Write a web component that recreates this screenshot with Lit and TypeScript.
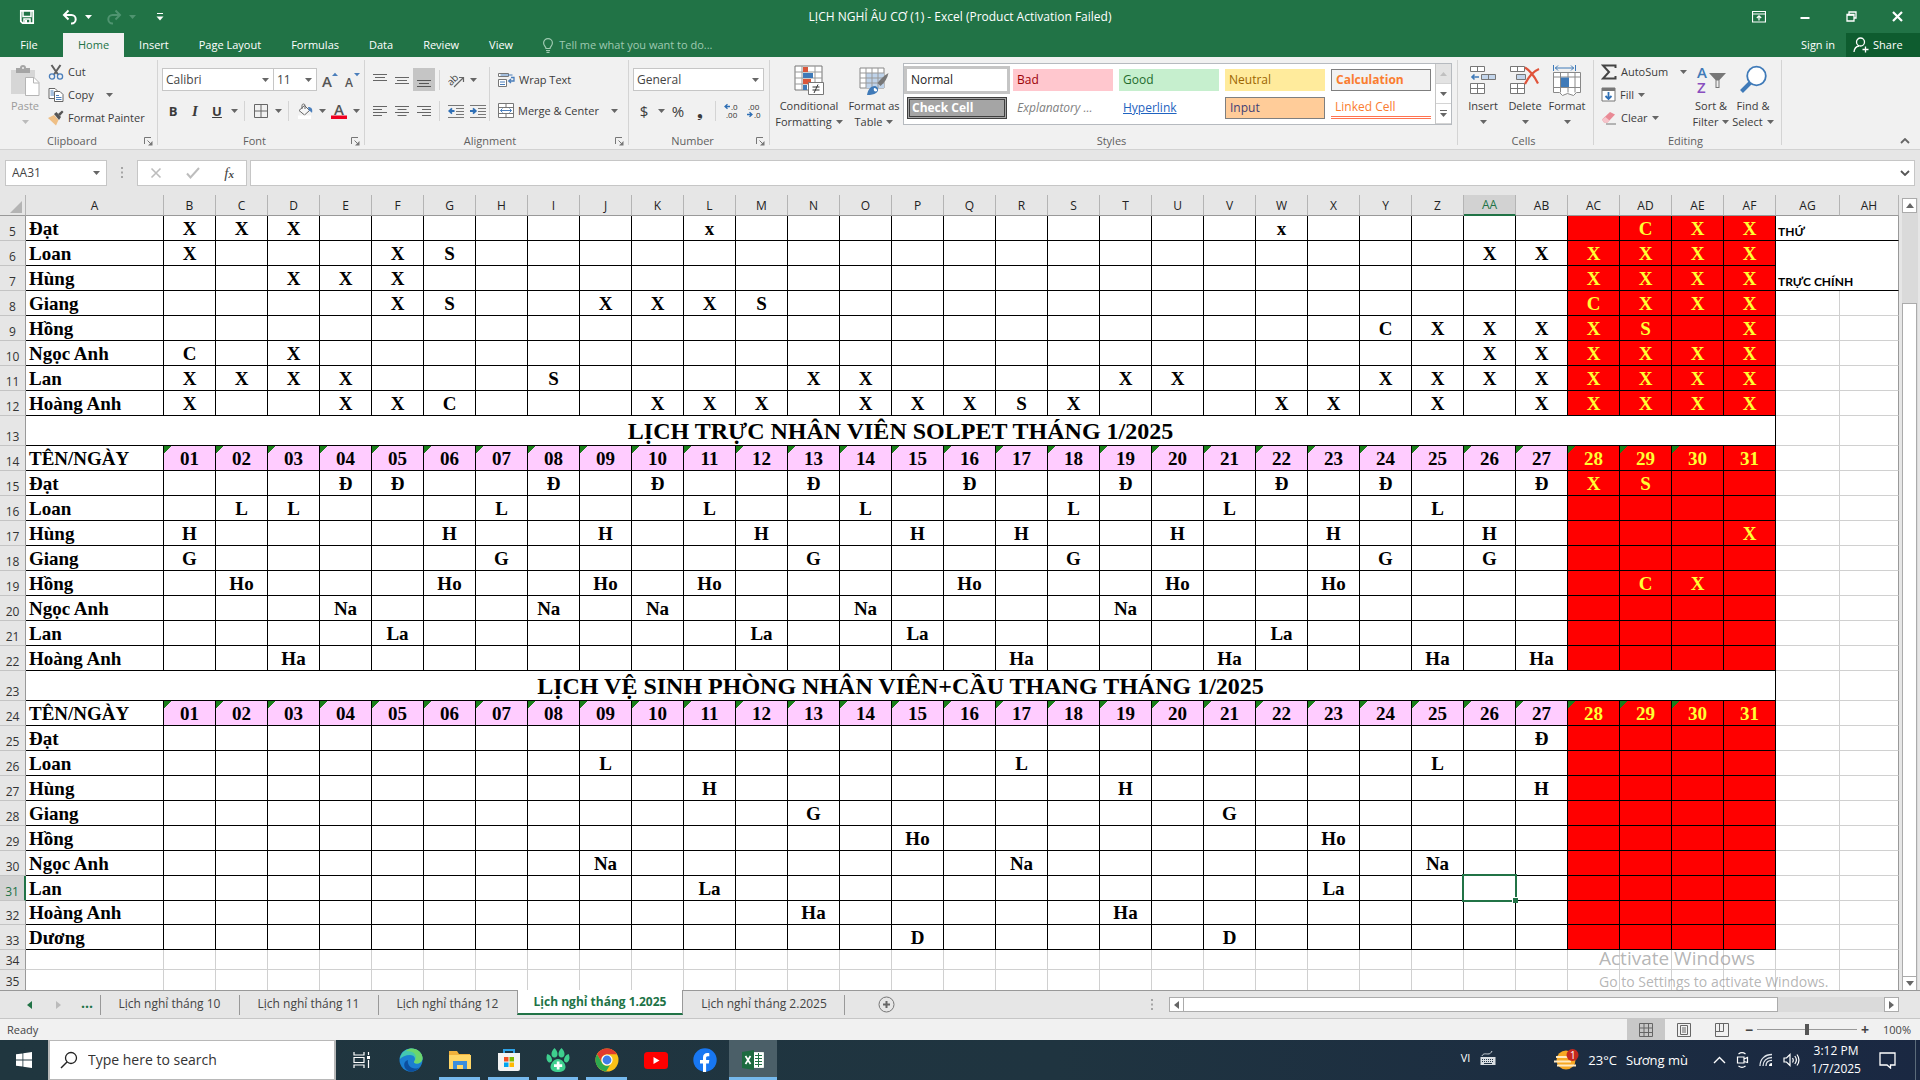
import { LitElement, html, svg, css, nothing } from "lit";
import { customElement } from "lit/decorators.js";
import { classMap } from "lit/directives/class-map.js";

type Marks = Record<number, string>;
interface Row {
  n: number;
  kind: "names" | "title" | "days" | "blank";
  label?: string;
  marks?: Marks;
}

/** Same mark on several days. */
const on = (text: string, ...days: number[]): Marks =>
  Object.fromEntries(days.map((d) => [d, text]));

const names = (n: number, label: string, ...marks: Marks[]): Row => ({
  n,
  kind: "names",
  label,
  marks: Object.assign({}, ...marks),
});

const ROWS: Row[] = [
  names(5, "Đạt", on("X", 1, 2, 3, 30, 31), on("x", 11, 22), on("C", 29)),
  names(6, "Loan", on("X", 1, 5, 26, 27, 28, 29, 30, 31), on("S", 6)),
  names(7, "Hùng", on("X", 3, 4, 5, 28, 29, 30, 31)),
  names(8, "Giang", on("X", 5, 9, 10, 11, 29, 30, 31), on("S", 6, 12), on("C", 28)),
  names(9, "Hồng", on("X", 25, 26, 27, 28, 31), on("C", 24), on("S", 29)),
  names(10, "Ngọc Anh", on("X", 3, 26, 27, 28, 29, 30, 31), on("C", 1)),
  names(11, "Lan", on("X", 1, 2, 3, 4, 13, 14, 19, 20, 24, 25, 26, 27, 28, 29, 30, 31), on("S", 8)),
  names(12, "Hoàng Anh", on("X", 1, 4, 5, 10, 11, 12, 14, 15, 16, 18, 22, 23, 25, 27, 28, 29, 30, 31), on("C", 6), on("S", 17)),
  { n: 13, kind: "title", label: "LỊCH TRỰC NHÂN VIÊN SOLPET THÁNG 1/2025" },
  { n: 14, kind: "days", label: "TÊN/NGÀY" },
  names(15, "Đạt", on("Đ", 4, 5, 8, 10, 13, 16, 19, 22, 24, 27), on("X", 28), on("S", 29)),
  names(16, "Loan", on("L", 2, 3, 7, 11, 14, 18, 21, 25)),
  names(17, "Hùng", on("H", 1, 6, 9, 12, 15, 17, 20, 23, 26), on("X", 31)),
  names(18, "Giang", on("G", 1, 7, 13, 18, 24, 26)),
  names(19, "Hồng", on("Ho", 2, 6, 9, 11, 16, 20, 23), on("C", 29), on("X", 30)),
  names(20, "Ngọc Anh", on("Na", 4, 10, 14, 19), on("Na  ", 8)),
  names(21, "Lan", on("La", 5, 12, 15, 22)),
  names(22, "Hoàng Anh", on("Ha", 3, 17, 21, 25, 27)),
  { n: 23, kind: "title", label: "LỊCH VỆ SINH PHÒNG NHÂN VIÊN+CẦU THANG THÁNG 1/2025" },
  { n: 24, kind: "days", label: "TÊN/NGÀY" },
  names(25, "Đạt", on("Đ", 27)),
  names(26, "Loan", on("L", 9, 17, 25)),
  names(27, "Hùng", on("H", 11, 19, 27)),
  names(28, "Giang", on("G", 13, 21)),
  names(29, "Hồng", on("Ho", 15, 23)),
  names(30, "Ngọc Anh", on("Na", 9, 17, 25)),
  names(31, "Lan", on("La", 11, 23)),
  names(32, "Hoàng Anh", on("Ha", 13, 19)),
  names(33, "Dương", on("D", 15, 21)),
  { n: 34, kind: "blank" },
  { n: 35, kind: "blank" },
];

const DAYS = Array.from({ length: 31 }, (_, i) => i + 1);
const letter = (i: number): string =>
  i < 26 ? String.fromCharCode(65 + i) : "A" + String.fromCharCode(65 + i - 26);

const icon = (w: number, h: number, body: unknown) =>
  html`<svg class="icon" width=${w} height=${h} viewBox="0 0 ${w} ${h}" fill="none" aria-hidden="true">${body}</svg>`;

const caret = html`<svg class="caret" width="7" height="4" viewBox="0 0 7 4" aria-hidden="true"><path d="M0 0h7L3.5 4z" fill="currentColor"/></svg>`;
const launcher = icon(9, 9, svg`<path d="M.5 7V.5H7M3.5 3.5l4 4" stroke="#777"/><path d="M8.500 4v4.500H4z" fill="#777"/>`);

const I = {
  save: icon(16, 16, svg`<path d="M1.800 1.800h12.400v12.400H3.600l-1.800-1.800z" stroke="#fff" stroke-width="1.700"/><path d="M4 2v5.500h8V2M5 14v-4h6v4" stroke="#fff" stroke-width="1.500"/><path d="M6 11h2v3H6z" fill="#fff"/>`),
  undo: icon(16, 16, svg`<path d="M2.500 6h7a4.200 4.200 0 0 1 0 8.400H9" stroke="#fff" stroke-width="2"/><path d="M6.500 1.500L2 6l4.500 4.500" stroke="#fff" stroke-width="2"/>`),
  redo: icon(16, 16, svg`<path d="M13.500 6h-7a4.200 4.200 0 0 0 0 8.400H7M9.500 1.500L14 6l-4.500 4.500" stroke="#4f9470" stroke-width="2"/>`),
  customize: icon(8, 8, svg`<path d="M1 .5h6" stroke="#fff"/><path d="M.5 3.500h7L4 7.500z" fill="#fff"/>`),
  ribbonOpts: icon(14, 12, svg`<path d="M.5 .5h13v10.500H.5zM.5 3h13M7 9.500V5M4.800 7L7 4.800 9.200 7" stroke="#fff" stroke-width="1.200"/>`),
  min: icon(10, 10, svg`<path d="M.5 6h9" stroke="#fff" stroke-width="2"/>`),
  restore: icon(11, 11, svg`<path d="M3 3V1h7v6H8M1 3.500h7v6.500H1z" stroke="#fff" stroke-width="1.300"/><path d="M1 4h7" stroke="#fff" stroke-width="1.600"/>`),
  close: icon(11, 11, svg`<path d="M1 1l9 9M10 1l-9 9" stroke="#fff" stroke-width="2.200"/>`),
  bulb: icon(12, 15, svg`<path d="M4 10.500c0-2-2.400-2.600-2.400-5.600a4.400 4.200 0 0 1 8.800 0c0 3-2.400 3.600-2.400 5.600zM4 12.500h4M4.500 14.300h3" stroke="#9fcab1" stroke-width="1.200"/>`),
  person: icon(16, 16, svg`<circle cx="7.500" cy="5" r="4" stroke="#fff" stroke-width="1.300"/><path d="M1 15c.3-3.500 2-5.500 5-6M9.500 12.500h6M12.500 9.500v6" stroke="#fff" stroke-width="1.300"/>`),
  paste: icon(30, 31, svg`<path d="M1 5h24v24H1z" fill="#d6d6d6"/><path d="M6 3h4a3 3 0 0 1 6 0h4v5H6z" fill="#a5a5a5"/><circle cx="13" cy="3" r="1" fill="#f1f1f1"/><path d="M15.500 12.500h8.500l5 5v13H15.500z" fill="#fff" stroke="#b5b5b5"/><path d="M23.500 12.500v5.500H29" stroke="#b5b5b5"/>`),
  cut: icon(16, 16, svg`<path d="M3.500 1l6.500 9.500M12.500 1L6 10.500" stroke="#5f5f5f" stroke-width="2"/><circle cx="4" cy="12.500" r="2.600" stroke="#4a7ebb" stroke-width="1.300"/><circle cx="12" cy="12.500" r="2.600" stroke="#4a7ebb" stroke-width="1.300"/>`),
  copy: icon(16, 16, svg`<path d="M1 1.500h6l2 2v8H1z" fill="#fff" stroke="#666"/><path d="M2.500 4h3M2.500 6h4M2.500 8h4" stroke="#4a7ebb"/><path d="M6.500 4.500H12l3 3v7H6.500z" fill="#fff" stroke="#666"/><path d="M8 8.500h3M8 10.500h5.500M8 12.500h5.500" stroke="#4a7ebb"/>`),
  painter: icon(16, 16, svg`<path d="M0 8l6-3 4.500 5L8 15.500z" fill="#efbf85"/><path d="M6 4l2.500-2 4.500 5-2 3z" fill="#555"/><path d="M10 4l4-3.500 1.500 1.500L12 6z" fill="#555"/>`),
  grow: icon(18, 16, svg`<text x="1" y="15" font-size="15" font-weight="600" fill="#555">A</text><path d="M11 4h6L14 .8z" fill="#4a7ebb"/>`),
  shrink: icon(18, 16, svg`<text x="2" y="15" font-size="12" font-weight="600" fill="#555">A</text><path d="M11 1h6l-3 3.200z" fill="#4a7ebb"/>`),
  borders: icon(14, 14, svg`<path d="M.5 .5h13v13H.5zM7 .5v13M.5 7h13" stroke="#666"/>`),
  fill: icon(16, 16, svg`<path d="M5 6V2.500C5 .5 8 .5 8 2.500V6M2 7.500L7.500 2.500l5 5-5 4.500z" fill="#f6f6f6" stroke="#666"/><path d="M11 4c3.500 0 5 2 4 6-1-1.500-2-2-3-2z" fill="#4a7ebb"/><path d="M1 12.500h13V16H1z" fill="#fff"/>`),
  fontColor: icon(16, 16, svg`<text x="3" y="12" font-size="15" font-weight="600" fill="#555">A</text><path d="M0 12.500h16V16H0z" fill="#f00020"/>`),
  alTop: icon(14, 14, svg`<path d="M0 1.500h14M2 4.500h10M0 7.500h14" stroke="#666"/>`),
  alMid: icon(14, 14, svg`<path d="M0 4.500h14M2 7.500h10M0 10.500h14" stroke="#666"/>`),
  alBot: icon(14, 14, svg`<path d="M0 7.500h14M2 10.500h10M0 13.500h14" stroke="#555"/>`),
  alLeft: icon(14, 14, svg`<path d="M0 2.500h14M0 5.500h9M0 8.500h14M0 11.500h9" stroke="#666"/>`),
  alCenter: icon(14, 14, svg`<path d="M0 2.500h14M2.500 5.500h9M0 8.500h14M2.500 11.500h9" stroke="#666"/>`),
  alRight: icon(14, 14, svg`<path d="M0 2.500h14M5 5.500h9M0 8.500h14M5 11.500h9" stroke="#666"/>`),
  orient: icon(17, 16, svg`<path d="M6 15L15.500 5.500M15.500 10V5.500H11" stroke="#666" stroke-width="1.200"/><text x="-1" y="11" font-size="10" fill="#444" transform="rotate(-45 5 8)">ab</text>`),
  outdent: icon(16, 14, svg`<path d="M0 1.500h16M8 4.500h8M8 7.500h8M8 10.500h8M0 13.500h16" stroke="#777"/><path d="M6.500 7H1.500M4 4.300L1.200 7 4 9.700" stroke="#2f6fb5" stroke-width="1.800"/>`),
  indent: icon(16, 14, svg`<path d="M0 1.500h16M8 4.500h8M8 7.500h8M8 10.500h8M0 13.500h16" stroke="#777"/><path d="M0 7h5.500M3 4.300L5.800 7 3 9.700" stroke="#2f6fb5" stroke-width="1.800"/>`),
  wrap: icon(17, 16, svg`<path d="M.5 1.500h10v3H.5zM.5 7.500h8v7H.5z" fill="#fff" stroke="#777"/><path d="M2.500 3h12M2 10h5M2 12.500h5" stroke="#4a7ebb"/><path d="M13 5.500h3V9h-5M13 7l-2.300 2 2.300 2" stroke="#4a7ebb" stroke-width="1.300"/>`),
  merge: icon(16, 15, svg`<path d="M.5 .5h15v14H.5zM.5 4.500h15M.5 10.500h15M8 .5v4M8 10.500v4" fill="#fff" stroke="#777"/><path d="M2.500 7.500h11M4.500 5.500l-2 2 2 2M11.500 5.500l2 2-2 2" stroke="#4a7ebb"/>`),
  cond: icon(30, 31, svg`<path d="M1 1h27v24H1z" fill="#fff" stroke="#777"/><path d="M1 7h27M1 13h27M1 19h27M8 1v24M21 1v24" stroke="#999"/><path d="M9 2h5v5H9zM9 14h8v5H9z" fill="#d9573b"/><path d="M9 8h10v5H9zM9 20h4v5H9z" fill="#3f7ab8"/><path d="M14.500 17.500h15v12h-15z" fill="#fff" stroke="#777"/><path d="M18.500 22h7M18.500 25h7M24 19.500L20 28" stroke="#333"/>`),
  fmtTable: icon(30, 31, svg`<path d="M1 3h24v20H1z" fill="#fff" stroke="#888"/><path d="M7 8h18v15H7z" fill="#bfd3ea"/><path d="M1 8h24M1 13h24M1 18h24M7 3v20M13 3v20M19 3v20" stroke="#999"/><path d="M29.500 8c-1 5-3.500 9-8 13l-3-3c3-4 6-7 11-10z" fill="#777"/><path d="M8 30c1-5 3-9 8-9 4 1 4 5 1 7-2 1.500-5 2-9 2z" fill="#3f7ab8"/><path d="M15 23c2 0 3.500 1.500 3 3-2 1-4 0-3-3z" fill="#fff"/>`),
  insert: icon(30, 31, svg`<path d="M2.500 1.500h14v5h-14zM9.500 1.500v5M2.500 18.500h14v10h-14zM9.500 18.500v10M2.500 23.500h14" fill="#fff" stroke="#777"/><path d="M13.500 9.500h14v5h-14zM20.500 9.500v5" fill="#c3d5eb" stroke="#777"/><path d="M3.500 12H11M6.500 9.500L4 12l2.500 2.500" stroke="#3f7ab8" stroke-width="1.600"/>`),
  del: icon(30, 31, svg`<path d="M.5 1.500h14v5H.5zM7.500 1.500v5M.5 18.500h14v10H.5zM7.500 18.500v10M.5 23.500h14" fill="#fff" stroke="#777"/><path d="M6.500 9.500h9v5h-9z" fill="#c3d5eb" stroke="#777"/><path d="M15 2.500c5 3 9 8 13 16M29 4c-5 2-10 7-14 15" stroke="#e0533a" stroke-width="2.200"/>`),
  format: icon(30, 32, svg`<path d="M1.500 0v6M23.500 0v6M3 3h19M6 .5L3.500 3 6 5.500M19 .5L21.500 3 19 5.500" stroke="#3f7ab8"/><path d="M1.500 7.500h27v20h-4l-3 3-6-2-5 2-3-3H1.500zM1.500 12h27M1.500 22.500h27M8.500 7.500v20M16 7.500v5M16 22.500v5M23 7.500v20" fill="#fff" stroke="#888"/><path d="M9 12.500h8v9.500H9z" fill="#3f7ab8"/>`),
  sum: icon(16, 16, svg`<path d="M14.500 4V1.500H2l6 6.500-6 6.500h12.500V12" stroke="#444" stroke-width="2"/>`),
  fillDown: icon(15, 15, svg`<path d="M1 1h13v13H1z" fill="#fff" stroke="#777"/><path d="M1 1h13v3H1z" fill="#777"/><path d="M7.500 5v7M4.500 9l3 3 3-3" stroke="#2f6fb5" stroke-width="1.800"/>`),
  clear: icon(16, 14, svg`<path d="M1 8.500L9 1l5 2.500-7.500 8H3z" fill="#e98a95"/><path d="M1 8.500L4.500 6l4 3.500-2 2H3z" fill="#f6c4ca"/><path d="M5 13h10" stroke="#777"/>`),
  sort: icon(30, 30, svg`<text x="1" y="13" font-size="15" font-weight="600" fill="#3f7ab8">A</text><text x="1" y="28" font-size="15" font-weight="600" fill="#8a4fbf">Z</text><path d="M13 8h17l-6.500 7v8h-4v-8z" fill="#777"/><path d="M20.500 15.500h2V22h-2z" fill="#eee"/>`),
  find: icon(30, 30, svg`<circle cx="18.500" cy="11" r="9.300" fill="#fff" stroke="#3f7ab8" stroke-width="1.800"/><path d="M12 18l-8.500 8.500" stroke="#3f7ab8" stroke-width="4"/>`),
  decInc: icon(16, 15, svg`<path d="M6 3.500H1.500M3.500 1.200L1 3.500l2.500 2.300" stroke="#2f6fb5" stroke-width="1.300"/><text x="7" y="7" font-size="8" fill="#333">.0</text><text x="2" y="15" font-size="8" fill="#333">.00</text>`),
  decDec: icon(16, 15, svg`<path d="M1 11.500h4.500M3.500 9.200L6 11.500l-2.500 2.300" stroke="#2f6fb5" stroke-width="1.300"/><text x="2" y="7" font-size="8" fill="#333">.00</text><text x="8" y="15" font-size="8" fill="#333">.0</text>`),
  chevUp: icon(10, 6, svg`<path d="M1 5l4-4 4 4" stroke="#666" stroke-width="1.800"/>`),
  chevDown: icon(10, 6, svg`<path d="M1 1l4 4 4-4" stroke="#555" stroke-width="1.800"/>`),
  cross: icon(12, 12, svg`<path d="M1.500 1.500l9 9M10.500 1.500l-9 9" stroke="#bdbdbd" stroke-width="1.600"/>`),
  check: icon(14, 12, svg`<path d="M1 6.500l3.500 4L13 1" stroke="#bdbdbd" stroke-width="2"/>`),
  dots: icon(3, 12, svg`<path d="M0 1h2M0 5.500h2M0 10h2" stroke="#a5a5a5" stroke-width="2"/>`),
  left: icon(5, 8, svg`<path d="M5 0v8L0 4z" fill="currentColor"/>`),
  right: icon(5, 8, svg`<path d="M0 0v8l5-4z" fill="currentColor"/>`),
  up: icon(8, 5, svg`<path d="M0 5h8L4 0z" fill="#666"/>`),
  down: icon(8, 5, svg`<path d="M0 0h8L4 5z" fill="#666"/>`),
  plus: icon(17, 17, svg`<circle cx="8.500" cy="8.500" r="7.500" stroke="#777"/><path d="M8.500 5v7M5 8.500h7" stroke="#666" stroke-width="2"/>`),
  vNormal: icon(14, 14, svg`<path d="M.5 .5h13v13H.5zM5 .5v13M9.500 .5v13M.5 5h13M.5 9.500h13" stroke="#666"/>`),
  vLayout: icon(14, 14, svg`<path d="M.5 .5h13v13H.5zM3.500 2.500h7v9h-7zM5 5h4M5 7h4M5 9h4" stroke="#666"/>`),
  vBreak: icon(14, 14, svg`<path d="M.5 .5h13v13H.5zM.5 8.500h8v-8M4.500 .5v8" stroke="#666"/>`),
  win: icon(16, 16, svg`<path d="M0 2.300L6.500 1.400v6.200H0zM7.300 1.300L16 0v7.600H7.300zM0 8.400h6.500v6.200L0 13.700zM7.300 8.400H16V16l-8.700-1.300z" fill="#fff"/>`),
  search: icon(18, 18, svg`<circle cx="11" cy="7" r="5.500" stroke="#222" stroke-width="1.300"/><path d="M7 11l-6 6" stroke="#222" stroke-width="1.500"/>`),
  taskView: icon(18, 16, svg`<path d="M1 0v3h10V0M1 5.500h10v5H1zM1 16v-3h10v3M15.500 0v3M15.500 8v8" stroke="#fff" stroke-width="1.200"/><path d="M14 4h3v3h-3z" fill="#fff"/>`),
  edge: icon(24, 24, svg`<circle cx="12" cy="12" r="11.500" fill="#1b7fd1"/><path d="M.8 11C2 4 7 .5 12.500 .5 19 .5 23.500 5.500 23.500 10c0 4-3 5.500-5.500 5.500-3 0-3.500-1.300-2.500-2.500 1.500-3-.5-6-4.500-6C6.500 7 3 9 .8 11z" fill="#44c8b0"/><path d="M12 .5c7 0 11.500 5 11.500 9.500 0 4-3 5.500-5.500 5.500-3 0-3.500-1.300-2.500-2.500C19 8 16 3 7 3c1.500-1.500 3-2.500 5-2.500z" fill="#6bd66e"/><path d="M9 12c-1 4 2 8.500 7 8.500 2 0 3.500-.5 5-1.500-3 4-8 5.500-12.500 3.500C4 20 4 13 9 12z" fill="#0c4f9f"/>`),
  explorer: icon(22, 20, svg`<path d="M0 1h8l2 3h11v15H0z" fill="#f0b13c"/><path d="M0 5h22v14H0z" fill="#ffd667"/><path d="M4 11h14v8h-4v-4H8v4H4z" fill="#3b8ddd"/>`),
  store: icon(24, 24, svg`<path d="M7 5V2h10v3" stroke="#2ea3e8" stroke-width="2"/><path d="M1 5h22v16a2 2 0 0 1-2 2H3a2 2 0 0 1-2-2z" fill="#f3f3f3"/><path d="M7 9h4.500v4.500H7z" fill="#f25022"/><path d="M12.500 9H17v4.500h-4.500z" fill="#7fba00"/><path d="M7 14.500h4.500V19H7z" fill="#00a4ef"/><path d="M12.500 14.500H17V19h-4.500z" fill="#ffb900"/>`),
  paw: icon(24, 24, svg`<g fill="#3ecf8e"><path d="M8.500 0c2 2 3 4 3 6s-1 3.500-3 3.500S5.500 8 5.500 6s1-4 3-6zM15.500 0c2 2 3 4 3 6s-1 3.500-3 3.500-3-1.500-3-3.500 1-4 3-6zM1.500 6c3 1 4.500 3.500 4.500 6 0 1.500-1 2.500-2.500 2.500S.5 12 .5 10c0-1.500.3-3 1-4zM22.500 6c-3 1-4.500 3.500-4.500 6 0 1.500 1 2.500 2.500 2.500s3-2.500 3-4.500c0-1.500-.3-3-1-4z"/><path d="M12 11c4 0 7.500 4.500 7.500 8 0 3-3 5-7.500 5s-7.500-2-7.500-5c0-3.500 3.500-8 7.500-8z"/></g><path d="M10.800 13.500h2.700v2.700h2.700v2.700h-2.700v2.700h-2.700v-2.700H8v-2.700h2.800z" fill="#fff"/>`),
  chrome: icon(24, 24, svg`<circle cx="12" cy="12" r="11.500" fill="#fbc116"/><path d="M2 6.300A11.500 11.500 0 0 1 22 6.300H12a5.700 5.700 0 0 0-5 8.500z" fill="#e33b2e"/><path d="M2 6.300l5.100 8.600a5.700 5.700 0 0 0 7.900 2.200L11 23.500A11.500 11.500 0 0 1 2 6.300z" fill="#2da94f"/><circle cx="12" cy="12" r="5.600" fill="#fff"/><circle cx="12" cy="12" r="4.400" fill="#3f7de8"/>`),
  youtube: icon(24, 17, svg`<rect width="24" height="17" rx="3.500" fill="#f00"/><path d="M9.500 5v7l6-3.500z" fill="#fff"/>`),
  facebook: icon(24, 24, svg`<circle cx="12" cy="12" r="11.700" fill="#1877f2"/><path d="M10 24v-8.500H7V12h3V9.500C10 6.500 11.800 5 14.300 5c1 0 2 .2 2 .2v3h-1.500c-1.300 0-1.700.8-1.700 1.600V12h3.200l-.5 3.500h-2.700V24z" fill="#fff"/>`),
  excel: icon(22, 20, svg`<path d="M11 2.500h10.500v15H11z" fill="#fff" stroke="#e6efe9"/><path d="M13 5.500h7M13 8.500h7M13 11.500h7M13 14.500h7M16.500 3v14" stroke="#217346"/><path d="M0 2l12-2v20L0 18z" fill="#1d6b40"/><path d="M3.500 6l5 8M8.500 6l-5 8" stroke="#fff" stroke-width="1.700"/>`),
  keyboard: icon(16, 15, svg`<path d="M.5 6h15v8H.5z" fill="#d9dee2"/><path d="M2 8.500h12M2 10.500h12" stroke="#26384a" stroke-dasharray="1 1"/><path d="M4 12.500h8" stroke="#26384a"/><path d="M2 5c1-3 4-2 6-2s3-1 4-3" stroke="#cfd6db"/>`),
  fog: icon(25, 22, svg`<circle cx="12" cy="11" r="9.500" fill="#f7a823"/><path d="M2 8h15M0 12.500h17M3 16.500h19" stroke="#ffe9c2" stroke-width="1.800"/><circle cx="18.500" cy="6" r="6" fill="#c4281f"/><text x="16" y="10" font-size="10" fill="#fff">1</text>`),
  trayUp: icon(13, 8, svg`<path d="M1 7l5.500-5.500L12 7" stroke="#fff" stroke-width="1.400"/>`),
  meet: icon(13, 16, svg`<path d="M1.500 5h6.500v6H1.500zM8 7l3.500-1.500v5L8 9.500M2.500 2c2-1.500 5-1.500 7 0M2.500 14c2 1.500 5 1.500 7 0" stroke="#fff" stroke-width="1.200"/>`),
  wifi: icon(14, 14, svg`<path d="M1 13C1 6 6 1.500 13 1.500M4 13c0-5 3.500-8.500 9-8.500M7 13c0-3.500 2-5.700 6-5.700" stroke="#dfe4ea" stroke-width="1.300"/><path d="M10 13a3 3 0 0 1 3-3v3z" fill="#fff"/>`),
  volume: icon(17, 14, svg`<path d="M1 5h2.500L7 1.500v11L3.500 9H1zM9.500 5c1 1.500 1 3 0 4.500M11.800 3c2 2.500 2 5.500 0 8M14 1.500c2.500 3.500 2.500 7.500 0 11" stroke="#fff" stroke-width="1.200"/>`),
  notify: icon(17, 17, svg`<path d="M1 1h15v12h-4.500v3L8 13H1z" stroke="#fff" stroke-width="1.300"/>`),
};

@customElement("xl-ribbon")
export class XlRibbon extends LitElement {
  static styles = css`
    :host {
      display: flex;
      height: 92px;
      background: #f1f1f1;
      border-bottom: 1px solid #d2d2d2;
      font: 11px/16px "Open Sans", "Noto Sans", sans-serif;
      color: #3b3b3b;
    }
    button, select {
      font: inherit;
      color: inherit;
      background: none;
      border: 0;
      padding: 0;
      margin: 0;
    }
    .icon, .caret { display: block; flex: none; }
    .caret { color: #666; }
    .group { display: flex; flex-direction: column; flex: none; }
    .body { flex: 1; display: flex; }
    .foot { display: flex; align-items: center; height: 16px; padding-right: 4px; color: #5f5f5f; }
    .foot .name { flex: 1; text-align: center; }
    .div { flex: none; width: 1px; margin: 3px 0 4px; background: #d4d4d4; }
    .w-clip { width: 157px; }
    .w-font { width: 206px; }
    .w-align { width: 263px; }
    .w-num { width: 140px; }
    .w-styles { width: 687px; }
    .w-cells { width: 135px; }
    .w-edit { width: 187px; }
    .tail { flex: 1; display: flex; align-items: flex-end; justify-content: flex-end; padding: 0 10px 5px 0; }

    .big { display: flex; flex-direction: column; align-items: center; width: 42px; padding-top: 8px; }
    .big .pic { height: 32px; display: flex; align-items: flex-start; margin-bottom: 1px; }
    .big .line { display: flex; align-items: center; gap: 4px; white-space: nowrap; height: 16px; }
    .big.wide { width: 72px; }
    .big.mid { width: 58px; }
    .big.off { color: #9b9b9b; }
    .big.off .caret { color: #bbb; }
    .list { display: flex; flex-direction: column; padding-top: 3px; align-items: flex-start; }
    .item { display: flex; align-items: center; height: 23px; gap: 4px; white-space: nowrap; }
    .item .far { margin-left: 8px; display: flex; }
    .clip { padding-left: 4px; }
    .clip .list { padding-left: 2px; }

    .rows { display: flex; flex-direction: column; gap: 8px; padding: 11px 0 0 3px; }
    .indent { padding-left: 4px; }
    .rows.more { padding-left: 8px; }
    .row { display: flex; align-items: center; height: 23px; }
    .tool { width: 22px; height: 23px; display: flex; align-items: center; justify-content: center; }
    .tool.on { background: #c5c5c5; }
    .drop { width: 12px; height: 23px; display: flex; align-items: center; justify-content: center; }
    .bar { width: 1px; height: 20px; margin: 0 5px 0 4px; background: #d4d4d4; }
    .tall { width: 1px; height: 54px; margin-top: 10px; background: #d4d4d4; }
    .bold { font-weight: 700; font-size: 13px; }
    .ital { font-style: italic; font-weight: 700; font-family: "Liberation Serif", serif; font-size: 15px; }
    .under { text-decoration: underline; }
    .sign { font-size: 15px; }
    .combo { display: flex; align-items: center; height: 23px; box-sizing: border-box; border: 1px solid #c6c6c6; background: #fff; padding-right: 4px; }
    .combo select { flex: 1; min-width: 0; height: 21px; appearance: none; padding-left: 3px; font-size: 12px; color: #444; }
    .family { width: 112px; }
    .size { width: 44px; margin-left: -1px; margin-right: 2px; }
    .numfmt { width: 131px; }

    .styles { padding-left: 3px; }
    .gallery { display: flex; align-self: flex-start; margin-top: 6px; height: 62px; box-sizing: border-box; border: 1px solid #b6babf; background: #fff; }
    .swatches { display: grid; grid-template-columns: repeat(5, 100px); gap: 6px; padding: 5px 4px 5px 3px; }
    .sw { height: 22px; box-sizing: border-box; padding: 0 4px; text-align: left; font-size: 12px; line-height: 20px; white-space: nowrap; }
    .normal { color: #222; background: #fff; outline: 3px solid #c5c5c5; }
    .bad { color: #9c0006; background: #ffc7ce; }
    .good { color: #1e6b2c; background: #c6efce; }
    .neutral { color: #9c6500; background: #ffeb9c; }
    .calc { color: #fa7d30; background: #f2f2f2; border: 1px solid #7f7f7f; font-weight: 700; }
    .chk { color: #fff; background: #a5a5a5; border: 3px double #3f3f3f; font-weight: 700; line-height: 16px; padding: 0 2px; }
    .expl { color: #7f7f7f; font-style: italic; }
    .link { color: #1f63c0; text-decoration: underline; }
    .inp { color: #3f3f76; background: #ffcc99; border: 1px solid #7f7f7f; }
    .linked { color: #fa7d30; border-bottom: 3px double #ff7350; }
    .spin { display: grid; grid-template-rows: repeat(3, 20px); width: 15px; border-left: 1px solid #c6c6c6; }
    .spin button { display: flex; flex-direction: column; align-items: center; justify-content: center; gap: 2px; border-bottom: 1px solid #d4d4d4; }
    .spin .dim { background: #e3e3e3; }
    .spin .dim .caret { color: #c0c0c0; transform: rotate(180deg); }
    .spin .dash { width: 7px; height: 1px; background: #666; }
    .cells { padding-left: 4px; }
    .edit { padding-left: 7px; }
    .edit .list { width: 89px; }
  `;

  private drop(label: string) {
    return html`<button class="drop" aria-label=${label}>${caret}</button>`;
  }
  private tool(label: string, content: unknown, cls = "") {
    return html`<button class="tool ${cls}" aria-label=${label}>${content}</button>`;
  }
  private foot(name: string, launch: boolean) {
    return html`<div class="foot"><span class="name">${name}</span>${launch ? html`<button aria-label="${name} settings">${launcher}</button>` : nothing}</div>`;
  }
  private big(pic: unknown, first: string, second = "", cls = "") {
    return html`<button class="big ${cls}">
      <span class="pic">${pic}</span><span class="line">${first}</span>
      <span class="line">${second}${caret}</span>
    </button>`;
  }

  render() {
    const bar = html`<span class="bar"></span>`;
    const div = html`<div class="div"></div>`;
    return html`
      <div class="group w-clip">
        <div class="body clip">
          ${this.big(I.paste, "Paste", "", "off")}
          <div class="list">
            <button class="item">${I.cut}Cut</button>
            <button class="item">${I.copy}Copy<span class="far">${caret}</span></button>
            <button class="item">${I.painter}Format Painter</button>
          </div>
        </div>
        ${this.foot("Clipboard", true)}
      </div>
      ${div}
      <div class="group w-font">
        <div class="body">
          <div class="rows indent">
            <div class="row">
              <label class="combo family"><select aria-label="Font"><option>Calibri</option></select>${caret}</label>
              <label class="combo size"><select aria-label="Font size"><option>11</option></select>${caret}</label>
              ${this.tool("Increase font size", I.grow)}${this.tool("Decrease font size", I.shrink)}
            </div>
            <div class="row">
              ${this.tool("Bold", "B", "bold")}${this.tool("Italic", "I", "ital")}${this.tool("Underline", "U", "bold under")}
              ${this.drop("Underline style")}${bar}${this.tool("Borders", I.borders)}${this.drop("Border style")}${bar}
              ${this.tool("Fill colour", I.fill)}${this.drop("Fill colours")}${this.tool("Font colour", I.fontColor)}${this.drop("Font colours")}
            </div>
          </div>
        </div>
        ${this.foot("Font", true)}
      </div>
      ${div}
      <div class="group w-align">
        <div class="body">
          <div class="rows indent">
            <div class="row">
              ${this.tool("Top align", I.alTop)}${this.tool("Middle align", I.alMid)}${this.tool("Bottom align", I.alBot, "on")}
              ${bar}${this.tool("Orientation", I.orient)}${this.drop("Orientation options")}
            </div>
            <div class="row">
              ${this.tool("Align left", I.alLeft)}${this.tool("Center", I.alCenter)}${this.tool("Align right", I.alRight)}
              ${bar}${this.tool("Decrease indent", I.outdent)}${this.tool("Increase indent", I.indent)}
            </div>
          </div>
          <span class="tall"></span>
          <div class="rows more">
            <button class="item">${I.wrap}Wrap Text</button>
            <button class="item">${I.merge}Merge &amp; Center<span class="far">${caret}</span></button>
          </div>
        </div>
        ${this.foot("Alignment", true)}
      </div>
      ${div}
      <div class="group w-num">
        <div class="body">
          <div class="rows indent">
            <div class="row"><label class="combo numfmt"><select aria-label="Number format"><option>General</option></select>${caret}</label></div>
            <div class="row">
              ${this.tool("Currency", "$", "sign")}${this.drop("Currency options")}${this.tool("Percent", "%", "sign")}${this.tool("Comma style", "❟", "sign")}
              ${bar}${this.tool("Increase decimal", I.decInc)}${this.tool("Decrease decimal", I.decDec)}
            </div>
          </div>
        </div>
        ${this.foot("Number", true)}
      </div>
      ${div}
      <div class="group w-styles">
        <div class="body styles">
          ${this.big(I.cond, "Conditional", "Formatting", "wide")}${this.big(I.fmtTable, "Format as", "Table", "mid")}
          <div class="gallery">
            <div class="swatches">
              <button class="sw normal">Normal</button><button class="sw bad">Bad</button><button class="sw good">Good</button>
              <button class="sw neutral">Neutral</button><button class="sw calc">Calculation</button><button class="sw chk">Check Cell</button>
              <button class="sw expl">Explanatory ...</button><button class="sw link">Hyperlink</button><button class="sw inp">Input</button>
              <button class="sw linked">Linked Cell</button>
            </div>
            <div class="spin">
              <button class="dim" aria-label="Previous styles">${caret}</button>
              <button aria-label="Next styles">${caret}</button>
              <button aria-label="All styles"><span class="dash"></span>${caret}</button>
            </div>
          </div>
        </div>
        ${this.foot("Styles", false)}
      </div>
      ${div}
      <div class="group w-cells">
        <div class="body cells">${this.big(I.insert, "Insert")}${this.big(I.del, "Delete")}${this.big(I.format, "Format")}</div>
        ${this.foot("Cells", false)}
      </div>
      ${div}
      <div class="group w-edit">
        <div class="body edit">
          <div class="list">
            <button class="item">${I.sum}AutoSum<span class="far">${caret}</span></button>
            <button class="item">${I.fillDown}Fill${caret}</button>
            <button class="item">${I.clear}Clear${caret}</button>
          </div>
          ${this.big(I.sort, "Sort &", "Filter")}${this.big(I.find, "Find &", "Select")}
        </div>
        ${this.foot("Editing", false)}
      </div>
      ${div}
      <div class="tail"><button aria-label="Collapse ribbon">${I.chevUp}</button></div>
    `;
  }
}

@customElement("xl-grid")
export class XlGrid extends LitElement {
  static styles = css`
    :host { display: block; }
    table {
      width: 100%;
      table-layout: fixed;
      border-collapse: separate;
      border-spacing: 0;
      background: #fff;
      color: #000;
    }
    .c-head { width: 26px; }
    .c-name { width: 138px; }
    .c-day { width: 52px; }
    .c-ag { width: 64px; }
    th, td { box-sizing: border-box; padding: 0; overflow: hidden; white-space: pre; }
    thead th {
      height: 21px;
      background: #e6e6e6;
      border-right: 1px solid #b4b4b4;
      border-bottom: 1px solid #999;
      font: 12px/19px "Open Sans", "Noto Sans", sans-serif;
      color: #222;
    }
    thead th.sel { background: #d2d2d2; color: #217346; border-bottom: 2px solid #217346; }
    .corner svg { display: block; margin: 4px 3px 0 auto; }
    tbody th {
      background: #e6e6e6;
      border-right: 1px solid #999;
      border-bottom: 1px solid #c4c4c4;
      font: 12px/16px "Open Sans", "Noto Sans", sans-serif;
      color: #333;
      vertical-align: bottom;
    }
    tbody th.sel { background: #d2d2d2; color: #217346; border-right: 2px solid #217346; }
    tbody tr { height: 25px; }
    tbody .short { height: 24px; }
    tbody .title { height: 30px; }
    tbody .blank { height: 20px; }
    tbody .last { height: 21px; }
    td {
      border-right: 1px solid #d0d0d0;
      border-bottom: 1px solid #d0d0d0;
      font: 700 19px/23px "Liberation Serif", "Times New Roman", serif;
      text-align: center;
    }
    .blank td, .last td { line-height: 16px; }
    td.ink { border-color: #000; }
    td.name { text-align: left; padding-left: 3px; }
    td.heading { font-size: 24px; line-height: 28px; }
    td.pink { background: #ffccff; }
    td.red { background: #f00; color: #ffff33; }
    td.flag { background-image: linear-gradient(135deg, #1a7f1a 5px, transparent 5px); }
    td.side { font: 700 12px/16px Lato, "Noto Sans", sans-serif; text-align: left; vertical-align: bottom; padding-left: 2px; }
    td.under { border-bottom-color: #000; }
    td.edge { border-right-color: #999; }
    .last td, .last th { border-bottom-color: #999; }
    td.active { position: relative; overflow: visible; }
    .cursor { position: absolute; inset: -2px; border: 2px solid #217346; }
    .handle { position: absolute; right: -3px; bottom: -3px; width: 5px; height: 5px; background: #217346; border: 1px solid #fff; border-right: 0; border-bottom: 0; }
  `;

  private side(r: Row) {
    if (r.n === 5) return html`<td class="side under edge" colspan="2">THỨ</td>`;
    if (r.n === 6) return html`<td class="side under edge" colspan="2" rowspan="2">TRỰC CHÍNH</td>`;
    if (r.n === 7) return nothing;
    return html`<td></td><td class="edge"></td>`;
  }

  private cells(r: Row) {
    if (r.kind === "title") return html`<td class="ink heading" colspan="32">${r.label}</td>`;
    if (r.kind === "blank") return html`<td></td>${DAYS.map(() => html`<td></td>`)}`;
    return html`<td class="ink name">${r.label}</td>${DAYS.map((d) => {
      const header = r.kind === "days";
      const active = r.n === 31 && d === 26;
      const cls = { ink: true, red: d > 27, pink: header && d <= 27, flag: header && d < 31, active };
      const text = header ? String(d).padStart(2, "0") : r.marks?.[d] ?? "";
      return html`<td class=${classMap(cls)}>${text}${active ? html`<span class="cursor"></span><span class="handle"></span>` : nothing}</td>`;
    })}`;
  }

  render() {
    return html`<table>
      <colgroup>
        <col class="c-head" /><col class="c-name" />${DAYS.map(() => html`<col class="c-day" />`)}<col class="c-ag" /><col />
      </colgroup>
      <thead><tr>
        <th class="corner"><svg width="12" height="12" viewBox="0 0 12 12" aria-hidden="true"><path d="M12 0v12H0z" fill="#b4b4b4"/></svg></th>
        ${Array.from({ length: 34 }, (_, i) => html`<th class=${classMap({ sel: i === 26 })} scope="col">${letter(i)}</th>`)}
      </tr></thead>
      <tbody>
        ${ROWS.map((r) => html`<tr class=${classMap({ title: r.kind === "title", blank: r.n === 34, last: r.n === 35, short: r.n === 32 })}>
          <th scope="row" class=${classMap({ sel: r.n === 31 })}>${r.n}</th>${this.cells(r)}${this.side(r)}
        </tr>`)}
      </tbody>
    </table>`;
  }
}

@customElement("win-taskbar")
export class WinTaskbar extends LitElement {
  static styles = css`
    :host {
      display: flex;
      height: 40px;
      background: linear-gradient(90deg, #20363f, #1f3440 55%, #1a2842);
      color: #fff;
      font: 13px/18px "Open Sans", "Noto Sans", sans-serif;
    }
    button { font: inherit; color: inherit; background: none; border: 0; padding: 0; }
    .icon { display: block; flex: none; }
    .start { width: 48px; display: flex; align-items: center; justify-content: center; }
    .search { display: flex; align-items: center; gap: 10px; width: 288px; box-sizing: border-box; padding: 0 10px; background: #fff; border: 2px solid #b8b8b8; border-top-width: 1px; border-bottom-width: 1px; }
    .search input { flex: 1; min-width: 0; border: 0; outline: 0; padding: 0; font: 14px/20px "Open Sans", "Noto Sans", sans-serif; background: none; }
    .search input::placeholder { color: #333; opacity: 1; }
    .apps { display: flex; flex: 1; padding-left: 1px; }
    .app { width: 49px; display: flex; align-items: center; justify-content: center; box-sizing: border-box; border-top: 3px solid transparent; border-bottom: 3px solid transparent; }
    .app.run { border-bottom-color: #76b9ed; margin: 0 4px; width: 41px; }
    .app.now { width: 48px; margin: 0; background: #4b5f68; border-top-color: #4b5f68; }
    .tray { display: flex; align-items: center; }
    .lang { font-size: 11px; display: flex; align-items: center; gap: 10px; margin-right: 58px; margin-bottom: 4px; }
    .weather { display: flex; align-items: center; gap: 9px; margin-right: 25px; }
    .marks { display: flex; align-items: center; gap: 10px; }
    .clock { width: 72px; text-align: center; font-size: 12px; }
    .note { width: 31px; display: flex; justify-content: center; }
    .show { width: 4px; height: 40px; margin-left: 12px; border-left: 1px solid #5b6b7a; }
  `;
  private app(label: string, pic: unknown, cls = "") {
    return html`<button class="app ${cls}" aria-label=${label}>${pic}</button>`;
  }
  render() {
    return html`
      <button class="start" aria-label="Start">${I.win}</button>
      <label class="search">${I.search}<input type="text" placeholder="Type here to search" aria-label="Search" /></label>
      <div class="apps">
        ${this.app("Task view", I.taskView)}${this.app("Edge", I.edge)}${this.app("File Explorer", I.explorer, "run")}
        ${this.app("Store", I.store, "run")}${this.app("Pet clinic", I.paw, "run")}${this.app("Chrome", I.chrome, "run")}
        ${this.app("YouTube", I.youtube)}${this.app("Facebook", I.facebook)}${this.app("Excel", I.excel, "run now")}
      </div>
      <div class="tray">
        <div class="lang"><span>VI</span>${I.keyboard}</div>
        <div class="weather">${I.fog}<span>23°C</span><span>Sương mù</span></div>
        <div class="marks">${I.trayUp}${I.meet}${I.wifi}${I.volume}</div>
        <div class="clock">3:12 PM<br />1/7/2025</div>
        <button class="note" aria-label="Notifications">${I.notify}</button>
        <span class="show"></span>
      </div>
    `;
  }
}

@customElement("app-root")
export class AppRoot extends LitElement {
  static styles = css`
    :host {
      display: flex;
      flex-direction: column;
      min-height: 100vh;
      position: relative;
      background: #e6e6e6;
      font: 12px/16px "Open Sans", "Noto Sans", sans-serif;
      color: #444;
    }
    button { font: inherit; color: inherit; background: none; border: 0; padding: 0; }
    a { color: inherit; text-decoration: none; }
    .icon, .caret { display: block; flex: none; }
    .titlebar { display: grid; grid-template-columns: 1fr auto 1fr; align-items: center; height: 33px; background: #217346; color: #fff; }
    .quick { display: flex; align-items: center; padding-left: 19px; }
    .quick .save { margin-right: 27px; }
    .quick .step { display: flex; align-items: center; gap: 7px; margin-right: 14px; color: #fff; }
    .quick .faded { color: #4f9470; margin-right: 20px; }
    .window { display: flex; justify-content: flex-end; }
    .window button { width: 46px; display: flex; justify-content: center; align-items: center; height: 28px; }
    .tabs { display: flex; height: 24px; background: #217346; color: #fff; font-size: 11px; line-height: 24px; }
    .tabs a { padding: 0 15px; }
    .tabs .file { width: 63px; padding: 0 5px 0 0; box-sizing: border-box; text-align: center; }
    .tabs .home { background: #f1f1f1; color: #217346; }
    .tell { display: flex; align-items: center; gap: 5px; margin-left: 14px; color: #9fcab1; }
    .account { display: flex; margin-left: auto; gap: 11px; }
    .account .signin { padding: 0; }
    .share { display: flex; align-items: center; gap: 4px; width: 74px; padding-left: 7px; box-sizing: border-box; background: #0e5c2f; }
    .formula { display: flex; height: 26px; padding: 10px 5px 9px; }
    .box { display: flex; align-items: center; box-sizing: border-box; background: #fff; border: 1px solid #c6c6c6; }
    .box input { flex: 1; min-width: 0; width: 0; border: 0; outline: 0; padding: 0 6px; font: 12px/16px "Open Sans", "Noto Sans", sans-serif; color: #444; background: none; }
    .where { width: 102px; padding-right: 6px; color: #666; }
    .grip { display: flex; align-items: center; width: 30px; justify-content: center; }
    .verbs { width: 110px; justify-content: space-between; padding: 0 12px; margin-right: 3px; }
    .fx { font: italic 15px/20px "Liberation Serif", serif; color: #444; }
    .fx small { font-size: 11px; font-weight: 700; }
    .entry { flex: 1; padding-right: 4px; }
    .sheet { display: flex; }
    .sheet xl-grid { flex: 1; min-width: 0; }
    .vscroll { width: 16px; margin: 3px 2px 0 3px; display: flex; flex-direction: column; background: #dadada; }
    .vscroll button, .hscroll button { width: 15px; height: 15px; display: flex; align-items: center; justify-content: center; background: #fff; box-sizing: border-box; border: 1px solid #ababab; color: #666; flex: none; }
    .vthumb { flex: 1; margin-top: 90px; width: 15px; box-sizing: border-box; background: #fff; border: 1px solid #ababab; border-bottom: 0; }
    .book { display: flex; height: 29px; border-bottom: 1px solid #c6c6c6; box-sizing: border-box; margin-top: -1px; border-top: 1px solid #999; }
    .nav { display: flex; align-items: center; width: 100px; color: #217346; box-sizing: border-box; padding-left: 27px; }
    .nav .next { margin: 0 20px 0 24px; color: #bbb; }
    .nav b { padding-bottom: 4px; font-size: 14px; }
    .tab { display: flex; align-items: center; width: 139px; box-sizing: border-box; justify-content: center; background: linear-gradient(#999, #999) left center / 1px 20px no-repeat; padding-bottom: 2px; white-space: nowrap; }
    .tab.open { width: 166px; margin: -1px 0 3px; background: #fff; color: #217346; font-weight: 700; border: 1px solid #999; border-top: 0; border-bottom: 2px solid #217346; padding: 0; }
    .tab.free { width: 162px; background-position: right center; }
    .add { margin-left: 33px; }
    .space { flex: 1; }
    .handle { display: flex; align-items: center; margin-right: 15px; }
    .hscroll { display: flex; align-self: center; width: 730px; margin-right: 21px; background: #dadada; }
    .hthumb { width: 594px; height: 15px; box-sizing: border-box; background: #fff; border: 1px solid #ababab; border-left: 0; margin-right: auto; }
    .status { display: flex; align-items: center; height: 21px; background: #f1f1f1; padding: 0 9px 0 7px; font-size: 11px; }
    .view { width: 38px; height: 21px; display: flex; align-items: center; justify-content: center; }
    .view.on { background: #c8c8c8; }
    .zoom { display: flex; align-items: center; gap: 4px; margin: 0 14px 0 4px; font-weight: 700; font-size: 14px; }
    .zoom input { appearance: none; width: 100px; height: 11px; margin: 0; background: linear-gradient(#999, #999) center / 100% 1px no-repeat; }
    .zoom input::-webkit-slider-thumb { appearance: none; width: 4px; height: 11px; background: #555; }
    win-taskbar { margin-top: auto; }
    .notice { position: absolute; left: 1599px; top: 944px; color: rgba(140, 140, 140, 0.65); font-size: 14px; line-height: 20px; pointer-events: none; white-space: nowrap; }
    .notice strong { display: block; font-weight: 400; font-size: 19px; line-height: 28px; }
  `;

  render() {
    return html`
      <header class="titlebar">
        <div class="quick">
          <button class="save" aria-label="Save">${I.save}</button>
          <button class="step" aria-label="Undo">${I.undo}${caret}</button>
          <button class="step faded" aria-label="Redo">${I.redo}${caret}</button>
          <button aria-label="Customize toolbar">${I.customize}</button>
        </div>
        <div>LỊCH NGHỈ ÂU CƠ (1) - Excel (Product Activation Failed)</div>
        <div class="window">
          <button aria-label="Ribbon display options">${I.ribbonOpts}</button><button aria-label="Minimize">${I.min}</button>
          <button aria-label="Restore">${I.restore}</button><button aria-label="Close">${I.close}</button>
        </div>
      </header>
      <nav class="tabs">
        <a class="file" href="#file">File</a><a class="home" href="#home">Home</a>
        ${["Insert", "Page Layout", "Formulas", "Data", "Review", "View"].map((t) => html`<a href="#${t}">${t}</a>`)}
        <button class="tell">${I.bulb}Tell me what you want to do...</button>
        <div class="account"><a class="signin" href="#signin">Sign in</a><button class="share">${I.person}Share</button></div>
      </nav>
      <xl-ribbon></xl-ribbon>
      <div class="formula">
        <label class="box where"><input type="text" value="AA31" aria-label="Name box" />${caret}</label>
        <span class="grip">${I.dots}</span>
        <div class="box verbs">
          <button aria-label="Cancel">${I.cross}</button><button aria-label="Enter">${I.check}</button>
          <button class="fx" aria-label="Insert function">f<small>x</small></button>
        </div>
        <label class="box entry"><input type="text" aria-label="Formula" />${I.chevDown}</label>
      </div>
      <main class="sheet">
        <xl-grid></xl-grid>
        <div class="vscroll">
          <button aria-label="Scroll up">${I.up}</button><span class="vthumb"></span><button aria-label="Scroll down">${I.down}</button>
        </div>
      </main>
      <div class="book">
        <div class="nav"><button aria-label="Previous sheets">${I.left}</button><button class="next" aria-label="Next sheets">${I.right}</button><b>...</b></div>
        <button class="tab">Lịch nghỉ tháng 10</button><button class="tab">Lịch nghỉ tháng 11</button>
        <button class="tab">Lịch nghỉ tháng 12</button><button class="tab open">Lịch nghỉ tháng 1.2025</button>
        <button class="tab free">Lịch nghỉ tháng 2.2025</button>
        <button class="add" aria-label="New sheet">${I.plus}</button>
        <span class="space"></span>
        <span class="handle">${I.dots}</span>
        <div class="hscroll">
          <button aria-label="Scroll left">${I.left}</button><span class="hthumb"></span><button aria-label="Scroll right">${I.right}</button>
        </div>
      </div>
      <footer class="status">
        <span>Ready</span><span class="space"></span>
        <button class="view on" aria-label="Normal view">${I.vNormal}</button><button class="view" aria-label="Page layout view">${I.vLayout}</button>
        <button class="view" aria-label="Page break preview">${I.vBreak}</button>
        <label class="zoom"><span>−</span><input type="range" min="0" max="200" value="100" aria-label="Zoom" /><span>+</span></label>
        <span>100%</span>
      </footer>
      <win-taskbar></win-taskbar>
      <div class="notice"><strong>Activate Windows</strong>Go to Settings to activate Windows.</div>
    `;
  }
}
